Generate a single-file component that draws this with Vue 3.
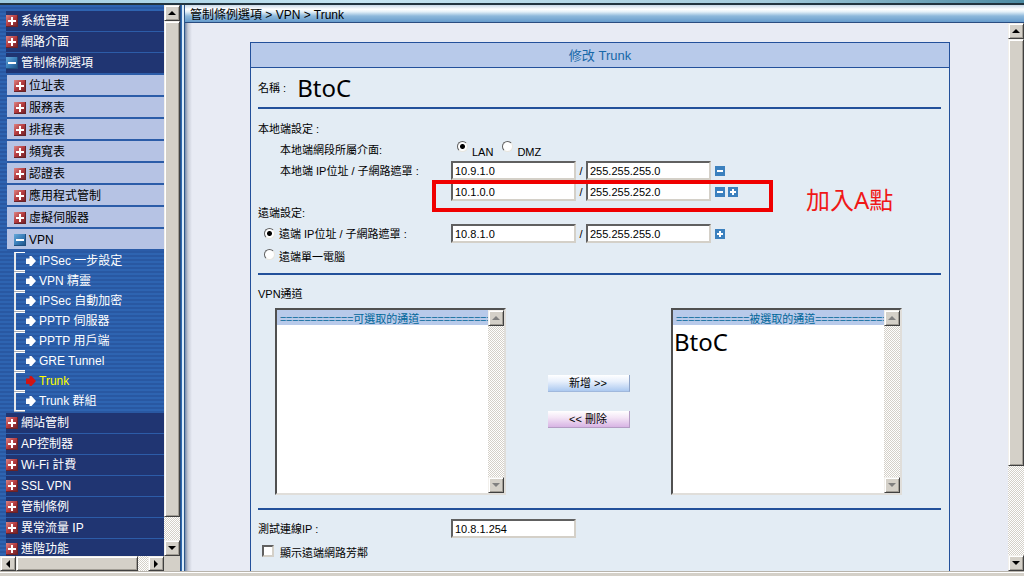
<script setup>
import { ref } from 'vue'

const topMenu = ['系統管理', '網路介面']
const ruleItems = ['位址表', '服務表', '排程表', '頻寬表', '認證表', '應用程式管制', '虛擬伺服器']
const vpnItems = [
  'IPSec 一步設定',
  'VPN 精靈',
  'IPSec 自動加密',
  'PPTP 伺服器',
  'PPTP 用戶端',
  'GRE Tunnel',
  'Trunk',
  'Trunk 群組',
]
const bottomMenu = ['網站管制', 'AP控制器', 'Wi-Fi 計費', 'SSL VPN', '管制條例', '異常流量 IP', '進階功能']

const side = ref('LAN')
const remoteMode = ref('subnet')
const localNets = ref([
  { ip: '10.9.1.0', mask: '255.255.255.0', add: false },
  { ip: '10.1.0.0', mask: '255.255.252.0', add: true },
])
const remoteIp = ref('10.8.1.0')
const remoteMask = ref('255.255.255.0')
const testIp = ref('10.8.1.254')
const showNeighbours = ref(false)
</script>

<template>
  <div class="page">
    <div class="top-strip"></div>
    <div class="frames">
      <aside class="sidebar">
        <div class="side-row">
          <nav class="menu">
            <a v-for="m in topMenu" :key="m" href="#" class="main-item"><i class="box plus"></i>{{ m }}</a>
            <a href="#" class="main-item"><i class="box minus"></i>管制條例選項</a>
            <div class="sub-list">
              <a v-for="m in ruleItems" :key="m" href="#" class="sub-item"><i class="box plus"></i>{{ m }}</a>
              <a href="#" class="sub-item"><i class="box minus"></i>VPN</a>
            </div>
            <div class="tree">
              <a v-for="m in vpnItems" :key="m" href="#" class="leaf" :class="{ current: m === 'Trunk' }">
                <i class="bracket"></i>
                <svg class="arrow" viewBox="0 0 10 10"><path d="M0 2.500H3.500V0H5.500L10 5L5.500 10H3.500V8H0Z" /></svg>
                <span>{{ m }}</span>
              </a>
            </div>
            <a v-for="m in bottomMenu" :key="m" href="#" class="main-item"><i class="box plus"></i>{{ m }}</a>
          </nav>
          <div class="bar vertical">
            <button type="button" class="key" aria-label="向上"><i class="tri up"></i></button>
            <div class="thumb side-thumb"></div>
            <div class="space"></div>
            <button type="button" class="key" aria-label="向下"><i class="tri down"></i></button>
          </div>
        </div>
        <div class="bar horizontal">
          <button type="button" class="key" aria-label="向左"><i class="tri left"></i></button>
          <div class="thumb wide-thumb"></div>
          <div class="space"></div>
          <button type="button" class="key" aria-label="向右"><i class="tri right"></i></button>
          <div class="corner"></div>
        </div>
      </aside>
      <div class="divider"></div>

      <main class="main">
        <header class="crumb">管制條例選項 &gt; VPN &gt; Trunk</header>
        <div class="main-row">
          <div class="content">
            <form class="panel" @submit.prevent>
              <h1 class="title">修改 Trunk</h1>
              <div class="body">
                <div class="name-row"><span>名稱 :</span><span class="big">BtoC</span></div>
                <hr />
                <section class="settings">
                  <div class="row">本地端設定 :</div>
                  <div class="row">
                    <span class="label indent">本地端網段所屬介面:</span>
                    <label class="choice"><input v-model="side" type="radio" name="side" value="LAN" /><span>LAN</span></label>
                    <label class="choice"><input v-model="side" type="radio" name="side" value="DMZ" /><span>DMZ</span></label>
                  </div>
                  <div v-for="(n, i) in localNets" :key="i" class="row">
                    <span class="label indent">{{ i === 0 ? '本地端 IP位址 / 子網路遮罩 :' : '' }}</span>
                    <input v-model="n.ip" class="field" type="text" aria-label="本地端 IP位址" />
                    <span class="slash">/</span>
                    <input v-model="n.mask" class="field" type="text" aria-label="子網路遮罩" />
                    <button type="button" class="tiny" aria-label="移除"><svg viewBox="0 0 10 10"><path d="M2 4h6v2H2z" /></svg></button>
                    <button v-if="n.add" type="button" class="tiny" aria-label="加入"><svg viewBox="0 0 10 10"><path d="M2 4h2V2h2v2h2v2H6v2H4V6H2z" /></svg></button>
                    <template v-if="i === 1">
                      <div class="frame-mark"></div>
                      <span class="note">加入A點</span>
                    </template>
                  </div>
                  <div class="row">遠端設定:</div>
                  <div class="row">
                    <label class="label mode"><input v-model="remoteMode" type="radio" name="mode" value="subnet" /><span>遠端 IP位址 / 子網路遮罩 :</span></label>
                    <input v-model="remoteIp" class="field" type="text" aria-label="遠端 IP位址" />
                    <span class="slash">/</span>
                    <input v-model="remoteMask" class="field" type="text" aria-label="遠端子網路遮罩" />
                    <button type="button" class="tiny" aria-label="加入"><svg viewBox="0 0 10 10"><path d="M2 4h2V2h2v2h2v2H6v2H4V6H2z" /></svg></button>
                  </div>
                  <div class="row">
                    <label class="label mode low"><input v-model="remoteMode" type="radio" name="mode" value="single" /><span>遠端單一電腦</span></label>
                  </div>
                </section>
                <hr />
                <section class="tunnels">
                  <div class="row">VPN通道</div>
                  <div class="transfer">
                    <div class="listbox">
                      <select multiple aria-label="可選取的通道">
                        <option class="head">============可選取的通道============</option>
                      </select>
                      <div class="bar vertical">
                        <button type="button" class="key" aria-label="向上" disabled><i class="tri up"></i></button>
                        <div class="space"></div>
                        <button type="button" class="key" aria-label="向下" disabled><i class="tri down"></i></button>
                      </div>
                    </div>
                    <div class="moves">
                      <button type="button" class="move add">新增 &gt;&gt;</button>
                      <button type="button" class="move remove">&lt;&lt; 刪除</button>
                    </div>
                    <div class="listbox">
                      <select multiple aria-label="被選取的通道">
                        <option class="head">============被選取的通道============</option>
                        <option class="entry">BtoC</option>
                      </select>
                      <div class="bar vertical">
                        <button type="button" class="key" aria-label="向上" disabled><i class="tri up"></i></button>
                        <div class="space"></div>
                        <button type="button" class="key" aria-label="向下" disabled><i class="tri down"></i></button>
                      </div>
                    </div>
                  </div>
                </section>
                <hr />
                <section class="settings last">
                  <div class="row">
                    <label class="label" for="test-ip">測試連線IP :</label>
                    <input id="test-ip" v-model="testIp" class="field" type="text" />
                  </div>
                  <div class="row tall">
                    <label class="neighbour"><input v-model="showNeighbours" type="checkbox" /><span>顯示遠端網路芳鄰</span></label>
                  </div>
                </section>
              </div>
            </form>
          </div>
          <div class="bar vertical">
            <button type="button" class="key" aria-label="向上"><i class="tri up"></i></button>
            <div class="thumb page-thumb"></div>
            <div class="space"></div>
            <button type="button" class="key" aria-label="向下"><i class="tri down"></i></button>
          </div>
        </div>
      </main>
    </div>
    <div class="bottom-strip"></div>
  </div>
</template>

<style>
body {
  margin: 0;
  overflow: hidden;
}
</style>

<style scoped>
* {
  box-sizing: border-box;
}
.page {
  height: 100vh;
  display: flex;
  flex-direction: column;
  font-family: "Liberation Sans", "Noto Sans CJK TC", sans-serif;
  font-size: 11px;
  line-height: 14px;
  color: #000;
  background: #e8ebf4;
}
.top-strip {
  flex: none;
  height: 5px;
  background: linear-gradient(90deg, #9dcbe0, #c6e5f2 35%, #a4cbdc 75%, #4c8aa2);
  border-bottom: 2px solid #22343f;
}
.bottom-strip {
  flex: none;
  height: 4px;
  background: #d4d0c8;
  border-top: 1px solid #fff;
}
.frames {
  flex: 1;
  min-height: 0;
  display: flex;
  border-bottom: 1px solid #b8b4ac;
}
.sidebar {
  flex: none;
  width: 180px;
  display: flex;
  flex-direction: column;
}
.side-row,
.main-row {
  flex: 1;
  min-height: 0;
  display: flex;
}
.menu {
  flex: 1;
  min-width: 0;
  overflow: hidden;
  padding: 6px 0 0 6px;
  font-size: 12px;
  background: repeating-linear-gradient(180deg, #2e64b1 0 2px, #2958a2 2px 4px);
}
.menu a {
  display: flex;
  align-items: center;
  text-decoration: none;
  white-space: nowrap;
}
.main-item {
  height: 21px;
  gap: 3px;
  color: #fff;
  background: #203572;
  border-bottom: 1px solid #2c5ca8;
}
.sub-list {
  display: flex;
  flex-direction: column;
  gap: 2px;
  margin-left: 1px;
  padding: 1px 0 2px;
  background: #2b5ca8;
}
.sub-item {
  height: 20px;
  gap: 3px;
  padding: 2px 0 0 7px;
  color: #000;
  background: #b6c3e4;
}
.box {
  flex: none;
  position: relative;
  width: 12px;
  height: 12px;
  background: linear-gradient(135deg, #dc8584, #b53c40 50%, #742228);
  border-right: 1px solid #682328;
  border-bottom: 1px solid #682328;
}
.box::before,
.box.plus::after {
  content: "";
  position: absolute;
  left: 2px;
  top: 5px;
  width: 8px;
  height: 2px;
  background: #fff;
}
.box.plus::after {
  left: 5px;
  top: 2px;
  width: 2px;
  height: 8px;
}
.box.minus {
  background: linear-gradient(135deg, #65a8d9, #3478b4 60%, #235687);
  border-color: #205080;
}
.tree {
  padding: 0 0 2px 8px;
}
.leaf {
  height: 20px;
  color: #fff;
}
.bracket {
  width: 11px;
  height: 19px;
  border: 1px solid #fff;
  border-right: 0;
  border-left: 2px solid #e6e8ec;
  box-shadow: 0 1px 0 #a9adb5;
}
.arrow {
  width: 10px;
  height: 10px;
  margin: 0 3px 0 1px;
  fill: #fff;
}
.current {
  color: #ff0;
}
.current .arrow {
  fill: #d01414;
}

/* scroll bars */
.bar {
  flex: none;
  display: flex;
  background: repeating-conic-gradient(#fff 0 25%, #d4d0c8 0 50%) 0 0 / 2px 2px;
}
.vertical {
  flex-direction: column;
  width: 16px;
}
.horizontal {
  height: 15px;
}
.space {
  flex: 1;
}
.key,
.thumb {
  flex: none;
  background: #d4d0c8;
  border: 1px solid;
  border-color: #f2f0ec #404040 #404040 #f2f0ec;
  box-shadow: inset 1px 1px 0 #fff, inset -1px -1px 0 #a09c94;
}
.key {
  display: flex;
  align-items: center;
  justify-content: center;
  width: 16px;
  height: 16px;
  padding: 0;
}
.horizontal .key {
  height: 15px;
}
.tri {
  border: 4px solid transparent;
}
.tri.up {
  border-top: 0;
  border-bottom-color: #000;
}
.tri.down {
  border-bottom: 0;
  border-top-color: #000;
}
.tri.left {
  border-left: 0;
  border-right-color: #000;
}
.tri.right {
  border-right: 0;
  border-left-color: #000;
}
.key:disabled .up {
  border-bottom-color: #808080;
}
.key:disabled .down {
  border-top-color: #808080;
}
.side-thumb {
  height: 90%;
}
.wide-thumb {
  width: 122px;
}
.page-thumb {
  height: 78%;
}
.corner {
  width: 16px;
  background: #d4d0c8;
}
.divider {
  flex: none;
  width: 5px;
  background: linear-gradient(90deg, #234c86 0 1px, #2f69ad 1px 2px, #dcecfa 2px 4px, #2d5689 4px 5px);
}

/* main frame */
.main {
  flex: 1;
  min-width: 0;
  display: flex;
  flex-direction: column;
}
.crumb {
  flex: none;
  height: 18px;
  padding-left: 5px;
  font-size: 12px;
  line-height: 20px;
  background: linear-gradient(180deg, #c9d9e8, #fff 25%, #e4f0f8 40%, #8db8db 65%, #669bcb);
  border-bottom: 1px solid #294c80;
}
.content {
  flex: 1;
  min-width: 0;
  overflow: hidden;
  padding: 19px 58px 0 65px;
  background: linear-gradient(90deg, #7488a8, #c6cad6 3px, #e8ebf4 7px);
}
.panel {
  border: 1px solid #23509a;
  background: #e3ecf4;
}
.title {
  margin: 0;
  height: 25px;
  border-bottom: 1px solid #23509a;
  background: #b8caea;
  color: #1768a8;
  font-size: 13px;
  font-weight: 400;
  line-height: 25px;
  text-align: center;
}
.body {
  padding: 0 8px 24px 7px;
}
hr {
  height: 2px;
  margin: 0;
  border: 0;
  background: #23509a;
}
.name-row {
  display: flex;
  align-items: center;
  gap: 11px;
  height: 39px;
}
.big {
  font-family: "Noto Sans", sans-serif;
  font-size: 24px;
  line-height: 34px;
}
.settings {
  padding: 9px 0 8px;
}
.row {
  position: relative;
  display: flex;
  align-items: center;
  height: 21px;
  white-space: nowrap;
}
.tall {
  height: 24px;
}
.label {
  flex: none;
  width: 193px;
}
.indent {
  padding-left: 22px;
}
.mode {
  display: flex;
  align-items: center;
  gap: 4px;
  padding-left: 6px;
}
.low span {
  padding-top: 4px;
}
.field {
  flex: none;
  width: 125px;
  height: 19px;
  margin: 0;
  padding: 0 2px;
  border: 2px solid;
  border-color: #606060 #d4d0c8 #d4d0c8 #606060;
  border-radius: 0;
  outline: 0;
  background: #fff;
  font: inherit;
  color: #000;
}
.slash {
  width: 10px;
  text-align: center;
}
.tiny {
  width: 10px;
  height: 10px;
  margin-left: 4px;
  padding: 0;
  border: 0;
  background: #3b80be;
}
.tiny + .tiny {
  margin-left: 3px;
}
.tiny svg {
  display: block;
  fill: #fff;
}
.choice {
  display: flex;
  gap: 4px;
  margin-left: 6px;
}
.choice span {
  padding-top: 4px;
}
.choice + .choice {
  margin-left: 9px;
}
input[type="radio"] {
  appearance: none;
  flex: none;
  width: 11px;
  height: 11px;
  margin: 0;
  border: 1px solid;
  border-color: #606060 #e8e6e0 #e8e6e0 #606060;
  border-radius: 50%;
  background: #fff;
}
input[type="radio"]:checked {
  background: radial-gradient(circle, #000 0 2px, #fff 3px);
}
input[type="checkbox"] {
  appearance: none;
  flex: none;
  width: 12px;
  height: 12px;
  margin: 0;
  border: 2px solid;
  border-color: #606060 #d4d0c8 #d4d0c8 #606060;
  background: #fff;
}
.frame-mark {
  position: absolute;
  left: 174px;
  top: -1px;
  width: 341px;
  height: 32px;
  border: 4px solid #f00000;
}
.note {
  position: absolute;
  left: 548px;
  top: 3px;
  color: #f01818;
  font-family: "Noto Sans", "Noto Sans CJK TC", sans-serif;
  font-size: 24px;
  line-height: 32px;
}
.tunnels {
  padding: 8px 0 13px;
}
.transfer {
  display: flex;
  align-items: center;
  justify-content: space-between;
  padding: 4px 39px 0 17px;
}
.listbox {
  display: flex;
  width: 231px;
  height: 187px;
  border: 2px solid;
  border-color: #505050 #e0deda #e0deda #505050;
  background: #fff;
}
select {
  appearance: none;
  flex: 1;
  min-width: 0;
  margin: 0;
  padding: 0;
  border: 0;
  border-radius: 0;
  outline: 0;
  overflow: hidden;
  background: #fff;
  font-family: "Noto Sans CJK TC", sans-serif;
  font-size: 11px;
}
.head {
  height: 15px;
  min-height: 0;
  padding: 0 0 0 3px;
  background: #b8caea;
  color: #006699;
  line-height: 15px;
}
.entry {
  padding: 0 1px;
  font-family: "Noto Sans", sans-serif;
  font-size: 24px;
  line-height: 34px;
  color: #000;
}
.moves {
  display: flex;
  flex-direction: column;
  gap: 19px;
}
.move {
  width: 82px;
  height: 17px;
  padding: 0;
  border: 0;
  border-right: 1px solid #8ea4c8;
  border-bottom: 1px solid #a0b8dc;
  font: inherit;
  line-height: 16px;
  color: #000;
}
.add {
  background: linear-gradient(180deg, #fff, #e8f0fc 40%, #acc9f0);
}
.remove {
  background: linear-gradient(180deg, #fff, #f4e6f6 40%, #d8b4e4);
  border-color: #b49cc4;
}
.last {
  padding-top: 8px;
}
.neighbour {
  display: flex;
  align-items: center;
  gap: 6px;
  padding-left: 4px;
}
.neighbour span {
  padding-top: 3px;
}
</style>
